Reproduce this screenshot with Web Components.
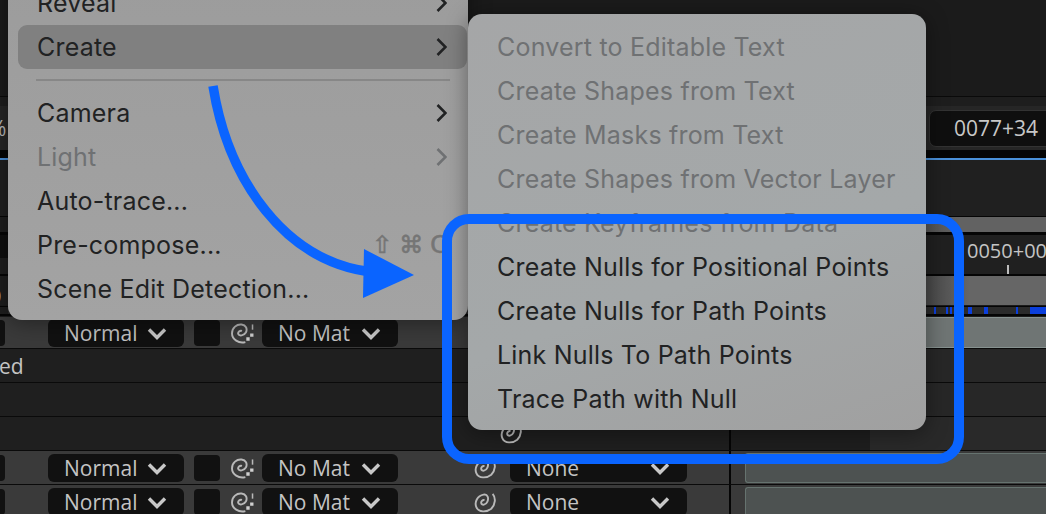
<!DOCTYPE html>
<html>
<head>
<meta charset="utf-8">
<title>Create menu</title>
<style>
html,body{margin:0;padding:0;background:#1b1b1b;overflow:hidden;}
#app{position:relative;width:1046px;height:514px;overflow:hidden;display:flex;flex-direction:column;font-family:"Open Sans","Liberation Sans",sans-serif;color:#c4c4c4;}
.frag{display:block;margin-left:-10px;font-size:20px;line-height:40px;height:29px;color:#bdbdbd;}
</style>
</head>
<body>
<div id="app">
    <tl-band h="96" bg="#1b1b1b" line="#0a0a0a"></tl-band>
    <tl-toolbar></tl-toolbar>
    <tl-band h="8" bg="#050505"></tl-band>
    <tl-band h="2" bg="#4a90d9"></tl-band>
    <tl-band h="56" bg="#202020" line="#050505"></tl-band>
    <tl-band h="15" bg="linear-gradient(90deg,#1e1e1e 8px,#4a4a4a 8px,#4a4a4a 900px,#626262 960px)" line="#050505"></tl-band>
    <tl-ruler></tl-ruler>
    <tl-band h="29" bg="linear-gradient(90deg,#1e1e1e 8px,#444 8px,#444 920px,#666 970px)"><span class="frag">0</span></tl-band>
    <tl-marks></tl-marks>

    <tl-layer h="31" bar="top" short></tl-layer>
    <tl-row h="33"><span slot="left" style="font-size:21px;margin-left:-1px;color:#c4c4c4">ed</span></tl-row>
    <tl-row h="33"></tl-row>
    <tl-row h="33" edge="1"><tl-spiral slot="left" style="margin-left:500px"></tl-spiral></tl-row>
    <tl-layer h="33" bar="full"></tl-layer>
    <tl-layer h="33" bar="full"></tl-layer>

    <ctx-menu style="left:8px;top:-30px;width:460px;">
        <ctx-item sub>Reveal</ctx-item>
        <ctx-item sub active>Create</ctx-item>
        <ctx-sep></ctx-sep>
        <ctx-item sub>Camera</ctx-item>
        <ctx-item sub disabled>Light</ctx-item>
        <ctx-item>Auto-trace...</ctx-item>
        <ctx-item keys="⇧⌘C">Pre-compose...</ctx-item>
        <ctx-item>Scene Edit Detection...</ctx-item>
    </ctx-menu>
    <ctx-menu class="sub" tone="light" style="left:468px;top:14px;width:458px;">
        <ctx-item disabled>Convert to Editable Text</ctx-item>
        <ctx-item disabled>Create Shapes from Text</ctx-item>
        <ctx-item disabled>Create Masks from Text</ctx-item>
        <ctx-item disabled>Create Shapes from Vector Layer</ctx-item>
        <ctx-item disabled>Create Keyframes from Data</ctx-item>
        <ctx-item>Create Nulls for Positional Points</ctx-item>
        <ctx-item>Create Nulls for Path Points</ctx-item>
        <ctx-item>Link Nulls To Path Points</ctx-item>
        <ctx-item>Trace Path with Null</ctx-item>
    </ctx-menu>
    <anno-overlay></anno-overlay>
</div>

<script>
// plain strip of the panel, height and colour come from attributes
class TlBand extends HTMLElement {
    constructor() {
        super();
        this.attachShadow({ mode: 'open' }).innerHTML = `
        <style>
        :host{display:block;flex:none;box-sizing:content-box;overflow:hidden;}
        </style>
        <slot></slot>`;
    }
    connectedCallback() {
        this.style.height = this.getAttribute('h') + 'px';
        this.style.background = this.getAttribute('bg');
        if (this.getAttribute('line')) {
            this.style.borderBottom = '1px solid ' + this.getAttribute('line');
        }
    }
}

class TlToolbar extends HTMLElement {
    constructor() {
        super();
        this.attachShadow({ mode: 'open' }).innerHTML = `
        <style>
        :host{display:flex;flex:none;height:53px;box-sizing:border-box;align-items:center;background:#262626;border-top:9px solid #1e1e1e;}
        .pct{margin-left:-11px;font-size:21px;color:#b8b8b8;}
        .tc{margin-left:auto;margin-right:-20px;width:137px;height:37px;box-sizing:border-box;background:#0f0f0f;border:1px solid #333;border-radius:7px;font-size:21px;color:#c8c8c8;line-height:34px;padding-left:24px;}
        </style>
        <span class="pct">%</span>
        <span class="tc">0077+34</span>`;
    }
}

class TlRuler extends HTMLElement {
    constructor() {
        super();
        this.attachShadow({ mode: 'open' }).innerHTML = `
        <style>
        :host{display:flex;flex:none;height:39px;background:#202020;border-bottom:2px solid #050505;border-top:2px solid #050505;overflow:hidden;}
        .edge{width:8px;background:linear-gradient(180deg,#0e0e0e 23px,#1e1e1e 23px);}
        .cell{margin-left:auto;width:79px;display:flex;flex-direction:column;align-items:flex-start;color:#c4c4c4;font-size:20px;line-height:32px;overflow:hidden;white-space:nowrap;}
        i{display:block;width:2px;height:9px;background:#bdbdbd;margin:-2px 0 0 40px;}
        </style>
        <div class="edge"></div>
        <div class="cell">0050+00<i></i></div>`;
    }
}

// work area strip with the blue cached frames
class TlMarks extends HTMLElement {
    constructor() {
        super();
        this.attachShadow({ mode: 'open' }).innerHTML = `
        <style>
        :host{display:block;flex:none;height:7px;margin:1px 0 1px;border-top:1px solid #050505;border-bottom:2px solid #050505;
            background:linear-gradient(90deg,#1e1e1e 8px,#2b2b2b 8px,#2b2b2b 934px,#0b3fdc 934px,#0b3fdc 936px,#2b2b2b 936px,#2b2b2b 946px,#0b3fdc 946px,#0b3fdc 948px,#2b2b2b 948px,#2b2b2b 950px,#0b3fdc 950px,#0b3fdc 952px,#2b2b2b 952px,#2b2b2b 968px,#0b3fdc 968px,#0b3fdc 972px,#2b2b2b 972px,#2b2b2b 984px,#0b3fdc 984px,#0b3fdc 988px,#2b2b2b 988px,#2b2b2b 1016px,#0b3fdc 1016px,#0b3fdc 1018px,#2b2b2b 1018px,#2b2b2b 1030px,#0b3fdc 1030px);}
        </style>`;
    }
}

class TlSelect extends HTMLElement {
    constructor() {
        super();
        this.attachShadow({ mode: 'open' }).innerHTML = `
        <style>
        :host{display:flex;flex:none;align-items:center;box-sizing:border-box;height:28px;background:#111;border-radius:6px;padding:0 17px 0 16px;justify-content:space-between;font-size:21px;color:#c4c4c4;}
        svg{display:block;flex:none;}
        </style>
        <slot></slot>
        <svg width="20" height="13" viewBox="0 0 20 13"><path d="M2 2.5 L10 10.5 L18 2.5" fill="none" stroke="#c8c8c8" stroke-width="3.4"/></svg>`;
    }
}

class TlSpiral extends HTMLElement {
    constructor() {
        super();
        const mat = this.hasAttribute('mat');
        this.attachShadow({ mode: 'open' }).innerHTML = `
        <style>
        :host{display:block;flex:none;width:23px;height:21px;}
        svg{display:block;}
        </style>
        <svg width="23" height="21" viewBox="0 0 24 22" fill="none" stroke="#b9b9b9" stroke-width="2">
        ${mat
            ? '<path d="M15 20 C8 22 1 17 1 11 C1 5 6 1 11 1.6 C15.5 2.2 17.5 6 15.5 10 C13.5 13.5 8.5 14 7.5 11.5 C7 9.5 9 7.5 11.5 8.2"/><path d="M22.5 1.5 V7" stroke-width="1.6"/><path d="M16 15 h3.5 v3.5 h-3.5z M20 11 h3.5 v3.5 h-3.5z" fill="#d0d0d0" stroke="none"/>'
            : '<path d="M19.5 2 C23 6 22.5 13 18 17.5 C13 21.5 5 21.5 2.5 16 C0 10.5 3.5 4 10 2.8 C14.5 2 15.5 6.5 14 10 C12.5 13.5 8 14.5 7.5 11.5 C7.2 9.5 9 8 11 8.5"/>'}
        </svg>`;
    }
}

// generic timeline row: left outline column, black divider, right track
class TlRow extends HTMLElement {
    constructor() {
        super();
        this.attachShadow({ mode: 'open' }).innerHTML = `
        <style>
        :host{display:grid;flex:none;grid-template-columns:729px 2px 1fr;border-bottom:1px solid #0a0a0a;background:#1f1f1f;overflow:hidden;}
        :host([edge]) .right{background:linear-gradient(90deg,#1e1e1e 139px,#292929 139px);}
        .left{display:flex;align-items:center;min-width:0;}
        .div{background:#050505;}
        .right{background:#272727;}
        </style>
        <div class="left"><slot name="left"></slot></div>
        <div class="div"></div>
        <div class="right"><slot name="right"></slot></div>`;
    }
    connectedCallback() {
        this.style.height = this.getAttribute('h') + 'px';
    }
}

// layer row with blend mode and track matte dropdowns
class TlLayer extends HTMLElement {
    constructor() {
        super();
        const tail = this.hasAttribute('short') ? '' : `
            <tl-spiral class="sp2"></tl-spiral>
            <tl-select class="none">None</tl-select>`;
        this.attachShadow({ mode: 'open' }).innerHTML = `
        <style>
        :host{display:grid;flex:none;grid-template-columns:729px 2px 1fr;background:#3a3a3a;border-bottom:1px solid #0a0a0a;overflow:hidden;}
        .left{display:flex;align-items:center;padding-top:1px;}
        .stub{width:5px;height:26px;background:#111;border-radius:0 4px 4px 0;margin-right:43px;flex:none;}
        .sq{width:26px;height:26px;background:#111;border-radius:4px;margin:0 11px 0 10px;flex:none;}
        .mode{width:136px;}
        .matte{width:136px;margin-left:8px;}
        .none{width:177px;margin-left:13px;}
        .sp2{margin-left:76px;}
        .div{background:#050505;}
        .right{background:#3a3a3a;display:flex;padding:2px 0 1px 14px;}
        .bar{flex:1;background:#4d5251;border:1px solid #66736f;border-right:0;border-radius:3px 0 0 3px;}
        :host([bar="top"]) .right{padding:0;}
        :host([bar="top"]) .bar{background:#6f7574;border-color:#879290;border-radius:0;border-left:0;}
        </style>
        <div class="left">
            <div class="stub"></div>
            <tl-select class="mode">Normal</tl-select>
            <div class="sq"></div>
            <tl-spiral mat></tl-spiral>
            <tl-select class="matte">No Mat</tl-select>${tail}
        </div>
        <div class="div"></div>
        <div class="right"><div class="bar"></div></div>`;
    }
    connectedCallback() {
        this.style.height = this.getAttribute('h') + 'px';
    }
}

class CtxMenu extends HTMLElement {
    constructor() {
        super();
        this.attachShadow({ mode: 'open' }).innerHTML = `
        <style>
        :host{position:absolute;display:block;box-sizing:border-box;padding:11px 0 9px;background:linear-gradient(180deg,#9c9c9c,#a3a3a3);border-radius:14px;box-shadow:0 3px 22px rgba(0,0,0,.4);font-family:Inter,"Liberation Sans",sans-serif;}
        :host([tone="light"]){background:linear-gradient(160deg,#a5a6a7 0%,#a4a8a9 60%,#a0a0a0 100%);}
        </style>
        <slot></slot>`;
    }
}

class CtxItem extends HTMLElement {
    constructor() {
        super();
        const keys = this.getAttribute('keys');
        this.attachShadow({ mode: 'open' }).innerHTML = `
        <style>
        :host{display:flex;align-items:center;height:44px;box-sizing:border-box;padding:0 21px 0 29px;font-size:25px;color:#212223;white-space:nowrap;letter-spacing:.2px;}
        :host([active]){background:#808080;border-radius:9px;margin:0 1px 0 10px;padding-left:19px;padding-right:20px;}
        :host([disabled]){color:#6f7173;}
        .end{margin-left:auto;display:flex;align-items:center;}
        .keys{color:#757575;font-family:"DejaVu Sans",sans-serif;font-size:24px;letter-spacing:7px;margin-right:-7px;-webkit-text-stroke:.6px #757575;}
        svg{display:block;}
        path{stroke:currentColor;}
        </style>
        <slot></slot>
        <span class="end">
        ${keys ? `<span class="keys">${keys}</span>` : ''}
        ${this.hasAttribute('sub') ? '<svg width="11" height="20" viewBox="0 0 11 20"><path d="M1.5 2 L9.5 10 L1.5 18" fill="none" stroke-width="2.6"/></svg>' : ''}
        </span>`;
    }
}

class CtxSep extends HTMLElement {
    constructor() {
        super();
        this.attachShadow({ mode: 'open' }).innerHTML = `
        <style>
        :host{display:flex;align-items:center;height:22px;padding:0 18px 0 28px;}
        i{display:block;flex:1;height:2px;background:#878787;}
        </style>
        <i></i>`;
    }
}

// the blue arrow and highlight rectangle drawn on top of the screenshot
class AnnoOverlay extends HTMLElement {
    constructor() {
        super();
        this.attachShadow({ mode: 'open' }).innerHTML = `
        <style>
        :host{position:absolute;left:0;top:0;width:1046px;height:514px;pointer-events:none;}
        svg{display:block;}
        </style>
        <svg width="1046" height="514" viewBox="0 0 1046 514">
            <rect x="447" y="219" width="512" height="240" rx="22" fill="none" stroke="#0a64ff" stroke-width="10"/>
            <path d="M213 86 C228 180 285 262 372 272" fill="none" stroke="#0a64ff" stroke-width="9.5"/>
            <polygon points="364,249 414,275 363,298" fill="#0a64ff"/>
        </svg>`;
    }
}

customElements.define('tl-band', TlBand);
customElements.define('tl-toolbar', TlToolbar);
customElements.define('tl-ruler', TlRuler);
customElements.define('tl-marks', TlMarks);
customElements.define('tl-select', TlSelect);
customElements.define('tl-spiral', TlSpiral);
customElements.define('tl-row', TlRow);
customElements.define('tl-layer', TlLayer);
customElements.define('ctx-menu', CtxMenu);
customElements.define('ctx-item', CtxItem);
customElements.define('ctx-sep', CtxSep);
customElements.define('anno-overlay', AnnoOverlay);
</script>
</body>
</html>
